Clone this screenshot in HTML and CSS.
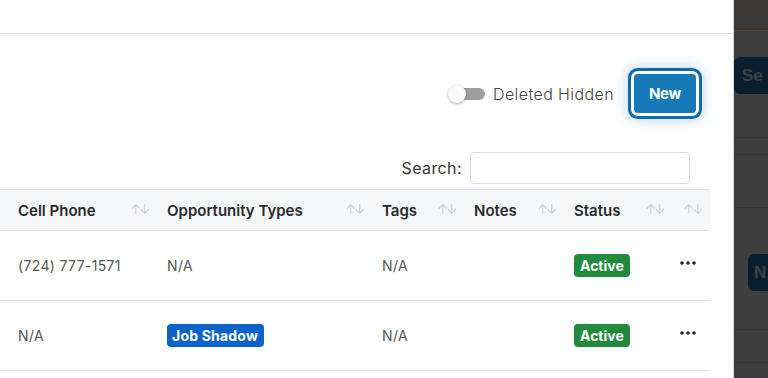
FILE: index.html
```html
<!DOCTYPE html>
<html lang="en">
<head>
  <meta charset="UTF-8" />
  <title>Contacts</title>
  <link rel="stylesheet" href="styles.css">
</head>
<body>
  <div class="page">
    <section class="modal">
      <div class="modal-header"></div>
      <div class="modal-body">
        <div class="toolbar">
          <label class="switch">
            <span class="track"><span class="knob"></span></span>
            <span class="switch-label">Deleted Hidden</span>
          </label>
          <button class="btn-new">New</button>
        </div>

        <div class="filter">
          <label for="search">Search:</label>
          <input id="search" type="text" />
        </div>

        <table class="grid">
          <colgroup>
            <col style="width: 157px">
            <col style="width: 215px">
            <col style="width: 92px">
            <col style="width: 100px">
            <col style="width: 108px">
            <col style="width: 38px">
          </colgroup>
          <thead>
            <tr>
              <th class="first">Cell Phone<span class="sort">↑↓</span></th>
              <th>Opportunity Types<span class="sort">↑↓</span></th>
              <th>Tags<span class="sort">↑↓</span></th>
              <th>Notes<span class="sort">↑↓</span></th>
              <th>Status<span class="sort">↑↓</span></th>
              <th><span class="sort">↑↓</span></th>
            </tr>
          </thead>
          <tbody>
            <tr>
              <td class="first">(724) 777-1571</td>
              <td>N/A</td>
              <td>N/A</td>
              <td></td>
              <td><span class="badge badge-active">Active</span></td>
              <td class="actions">
                <svg width="16" height="4" viewBox="0 0 16 4"><circle cx="2" cy="2" r="1.8"/><circle cx="8" cy="2" r="1.8"/><circle cx="14" cy="2" r="1.8"/></svg>
              </td>
            </tr>
            <tr>
              <td class="first">N/A</td>
              <td><span class="badge badge-type">Job Shadow</span></td>
              <td>N/A</td>
              <td></td>
              <td><span class="badge badge-active">Active</span></td>
              <td class="actions">
                <svg width="16" height="4" viewBox="0 0 16 4"><circle cx="2" cy="2" r="1.8"/><circle cx="8" cy="2" r="1.8"/><circle cx="14" cy="2" r="1.8"/></svg>
              </td>
            </tr>
          </tbody>
        </table>
      </div>
    </section>

    <!-- page behind the dialog -->
    <aside class="backdrop">
      <div class="bd-top"></div>
      <div class="bd-btn bd-btn-a">Se</div>
      <div class="bd-line bd-line-a"></div>
      <div class="bd-line bd-line-b"></div>
      <div class="bd-line bd-line-c"></div>
      <div class="bd-btn bd-btn-b">N</div>
      <div class="bd-line bd-line-d"></div>
      <div class="bd-line bd-line-e"></div>
    </aside>
  </div>
</body>
</html>
```

FILE: styles.css
```css
body {
  margin: 0;
  font-family: "Inter", "Noto Sans", sans-serif;
  color: #333;
  overflow: hidden;
}

.page {
  display: flex;
  height: 378px;
}

.modal {
  width: 733px;
  background: #fff;
  border-right: 1px solid #cfd8de;
}

.modal-header {
  height: 33px;
  border-bottom: 1px solid #dee2e6;
}

.modal-body {
  width: 710px;
  padding-top: 33px;
}

.toolbar {
  display: flex;
  justify-content: flex-end;
  align-items: center;
  height: 53px;
  padding-right: 7px;
}

.switch {
  display: flex;
  align-items: center;
  margin-right: 13px;
}

.track {
  position: relative;
  width: 29px;
  height: 12px;
  margin-left: 8px;
  border-radius: 6px;
  background: #9e9e9e;
}

.knob {
  position: absolute;
  left: -8px;
  top: -3px;
  width: 18px;
  height: 18px;
  border-radius: 50%;
  background: #fafafa;
  box-shadow: 0 1px 3px rgba(0, 0, 0, 0.35);
}

.switch-label {
  margin-left: 8px;
  font-size: 16px;
  font-weight: 300;
  letter-spacing: 0.4px;
  color: #444;
}

.btn-new {
  width: 62px;
  height: 39px;
  margin: 7px;
  border: 0;
  border-radius: 4px;
  background: #1779b8;
  color: #fff;
  font-family: "Inter", sans-serif;
  font-size: 15px;
  font-weight: 700;
  letter-spacing: -0.3px;
  box-shadow: 0 0 0 3px #fff, 0 0 0 6px #136aa6, 0 0 14px 6px rgba(30, 125, 200, 0.35);
}

.filter {
  display: flex;
  justify-content: flex-end;
  align-items: center;
  margin-top: 32px;
  padding-right: 20px;
}

.filter label {
  font-size: 16px;
  letter-spacing: 0.4px;
  color: #333;
  margin-right: 8px;
}

.filter input {
  width: 218px;
  height: 30px;
  padding: 0;
  border: 1px solid #d3dce3;
  border-radius: 4px;
}

.grid {
  margin-top: 5px;
  width: 710px;
  table-layout: fixed;
  border-collapse: collapse;
}

.grid th {
  position: relative;
  height: 40px;
  padding: 0 10px;
  text-align: left;
  font-size: 15px;
  font-weight: 600;
  color: #2a2a2a;
  background: #f5f7f9;
  border-top: 1px solid #dee2e6;
  border-bottom: 1px solid #dee2e6;
}

.grid th.first,
.grid td.first {
  padding-left: 18px;
}

.sort {
  position: absolute;
  right: 9px;
  top: 11px;
  font-size: 13px;
  font-weight: 300;
  color: #c4c8cc;
  letter-spacing: -2px;
}

.grid td {
  height: 69px;
  padding: 0 10px;
  font-size: 14px;
  letter-spacing: 0.35px;
  color: #555;
  border-bottom: 1px solid #dee2e6;
}

.badge {
  display: inline-block;
  padding: 3px 6px;
  border-radius: 4px;
  color: #fff;
  font-size: 14px;
  font-weight: 700;
  letter-spacing: 0;
}

.badge-active {
  background: #218a3c;
}

.badge-type {
  background: #0b62c9;
  padding: 3px 6px 3px 5px;
  letter-spacing: 0.2px;
}

.actions svg {
  display: block;
  margin: -5px 0 0 -2px;
  fill: #222;
}

.backdrop {
  flex: 1;
  background: #3e3e3e;
  overflow: hidden;
}

.bd-top {
  height: 30px;
  background: #393836;
  border-bottom: 1px solid #5c4120;
}

.bd-btn {
  height: 37px;
  line-height: 37px;
  background: #0b1e2d;
  color: #3b4146;
  font-family: "Liberation Sans", sans-serif;
  font-weight: 700;
  font-size: 17px;
}

.bd-btn-a {
  margin-top: 26px;
  padding-left: 8px;
  border-radius: 6px 0 0 6px;
}

.bd-btn-b {
  margin-top: 46px;
  margin-left: 14px;
  padding-left: 6px;
  border-radius: 6px 0 0 6px;
}

.bd-line {
  height: 1px;
  background: #363636;
}

.bd-line-a { margin-top: 43px; }
.bd-line-b { margin-top: 16px; }
.bd-line-c { margin-top: 52px; }
.bd-line-d { margin-top: 38px; }
.bd-line-e { margin-top: 32px; }
```
